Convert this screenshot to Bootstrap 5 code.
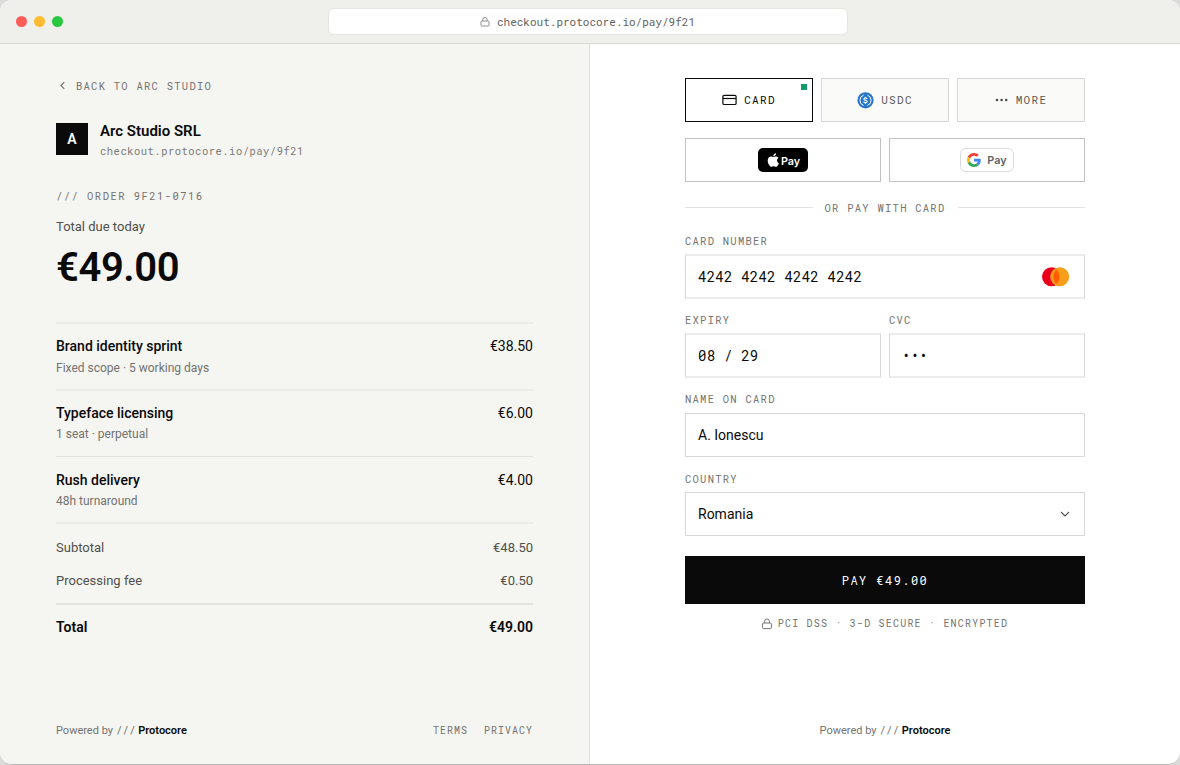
<!DOCTYPE html>
<html lang="en">
<head>
<meta charset="utf-8">
<meta name="viewport" content="width=device-width, initial-scale=1">
<title>Checkout – Arc Studio SRL</title>
<link rel="stylesheet" href="https://cdn.jsdelivr.net/npm/bootstrap@5.3.0/dist/css/bootstrap.min.css">
<style>
  :root { --ink:#0a0a0a; --muted:#737370; --soft:#50504d; --rule:#e2e2de; --field:#d9d9d9; }
  html, body { height:100%; overflow:hidden; }
  body { font-family:Roboto,"Liberation Sans",sans-serif; font-size:14px; color:var(--ink); background:#dcdcda; }
  svg { display:block; flex:none; }
  .mono { font-family:"Roboto Mono","Liberation Mono",monospace; }
  .browser { height:765px; border-bottom:1px solid #b7b7b5; border-radius:12px; overflow:hidden; background:#fff; }
  .titlebar { height:44px; background:#efefeb; border-bottom:1px solid #dadad5; padding:0 16px; }
  .dot { width:11px; height:11px; border-radius:50%; }
  .dots { gap:7px; width:311.5px; }
  .address { width:520px; height:27px; margin-top:-1px; padding-top:2px; border:1px solid #e6e6e2; border-radius:6px; background:#fff; font-size:11px; color:#62625e; gap:7px; }
  .summary { width:590px; background:#f5f5f1; border-right:1px solid #dfdfdb; padding:34px 56px 25px; }
  .caps { font-size:10.5px; letter-spacing:.12em; color:var(--muted); line-height:16px; }
  .back { gap:7px; }
  .merchant { margin-top:29px; gap:12px; height:32px; }
  .avatar { width:32px; height:32px; background:var(--ink); color:#fff; font-size:14px; font-weight:600; }
  .merchant-name { font-size:15px; font-weight:600; line-height:17px; letter-spacing:0; }
  .merchant-url { font-size:10.5px; letter-spacing:.047em; color:#7b7b78; line-height:16px; margin-top:3px; }
  .order { margin-top:33px; letter-spacing:.14em; }
  .due { margin-top:13px; font-size:13px; line-height:20px; color:var(--soft); }
  .amount { margin-top:7px; font-size:40px; line-height:48px; font-weight:600; letter-spacing:-.01em; }
  .lines { margin-top:30px; }
  .item { height:67px; border-top:2px solid #ebebe7; padding-top:12px; font-size:14px; line-height:20px; }
  .item.thin { border-top:1px solid #e2e2de; height:66px; padding-top:13px; }
  .item-name { font-weight:500; }
  .item-note { font-size:12px; line-height:16px; margin-top:3px; color:var(--muted); }
  .item:first-child .item-note { margin-top:4px; }
  .sums { border-top:2px solid #ebebe7; font-size:13px; color:var(--soft); height:81px; padding-top:14px; line-height:20px; }
  .sums .fee { margin-top:13px; }
  .grand { border-top:2px solid #e2e2de; padding-top:12px; line-height:20px; font-weight:600; }
  .foot { font-size:11px; line-height:16px; color:var(--muted); }
  .foot b { color:var(--ink); font-weight:600; }
  .links { font-size:10px; letter-spacing:.1em; padding-top:1px; }
  .pay-side { padding:34px 0 25px; }
  .form-col { width:400px; }
  .tab { height:44px; border:1px solid #d6d6d4; background:#fafaf8; font-size:11px; letter-spacing:.12em; color:#5a5a57; gap:7px; }
  .tab.on { border-color:var(--ink); background:#fff; color:var(--ink); position:relative; }
  .tab.on::after { content:""; position:absolute; width:6px; height:6px; right:5px; top:5px; background:#0f9d6e; }
  .wallet { height:44px; border:1px solid #c3c3c3; background:#fff; }
  .applepay { width:50px; height:24px; border-radius:5px; background:#000; color:#fff; font:600 10.8px Inter,sans-serif; gap:2px; padding-left:1px; }
  .apple-word { padding-top:2px; }
  .gpay { width:54px; height:24px; border-radius:6px; border:1px solid #dadce0; color:#5f6368; font:600 10.9px Inter,sans-serif; gap:6px; }
  .divider { height:16px; margin-top:18px; gap:12px; }
  .divider i { height:1px; background:#e2e2e0; margin-top:-1px; }
  .fld-label { line-height:17px; }
  .fld { height:44px; border:1px solid #d8d8d8; padding:0 12px; font-size:14px; }
  .fld.tall { height:45px; border-width:2px 1px; border-top-color:#ececec; border-bottom-color:#ececec; }
  .fld.mono { letter-spacing:.017em; }
  .paybtn { height:48px; background:var(--ink); color:#fff; font-size:12px; letter-spacing:.12em; margin-top:20px; }
  .secure { margin-top:12px; gap:6px; font-size:10px; }
</style>
</head>
<body>
<div class="browser d-flex flex-column">
  <header class="titlebar d-flex align-items-center flex-shrink-0">
    <div class="dots d-flex">
      <span class="dot" style="background:#ff5f57"></span>
      <span class="dot" style="background:#febc2e"></span>
      <span class="dot" style="background:#28c840"></span>
    </div>
    <div class="address mono d-flex align-items-center justify-content-center">
      <svg width="10" height="11" viewBox="0 0 10 11" fill="none" stroke="#8f8f8b"><rect x="1" y="4" width="8" height="5" rx=".8"/><path d="M2.8 4V2.7a2.2 2.2 0 0 1 4.4 0V4"/></svg>
      <span>checkout.protocore.io/pay/9f21</span>
    </div>
  </header>

  <main class="d-flex flex-grow-1">
    <section class="summary d-flex flex-column flex-shrink-0">
      <div class="back caps mono d-flex align-items-center">
        <svg width="13" height="12" viewBox="0 0 13 12" fill="none" stroke="#6f6f6b" stroke-width="1.1"><path d="M8.3 2.2 4.9 5.5l3.4 3.3"/></svg>
        <span>BACK TO ARC STUDIO</span>
      </div>
      <div class="merchant d-flex">
        <div class="avatar d-flex align-items-center justify-content-center">A</div>
        <div>
          <div class="merchant-name">Arc Studio SRL</div>
          <div class="merchant-url mono">checkout.protocore.io/pay/9f21</div>
        </div>
      </div>
      <div class="order caps mono">/// ORDER 9F21-0716</div>
      <div class="due">Total due today</div>
      <div class="amount">€49.00</div>

      <div class="lines">
        <div class="item d-flex justify-content-between">
          <div><div class="item-name">Brand identity sprint</div><div class="item-note">Fixed scope · 5 working days</div></div>
          <div>€38.50</div>
        </div>
        <div class="item d-flex justify-content-between">
          <div><div class="item-name">Typeface licensing</div><div class="item-note">1 seat · perpetual</div></div>
          <div>€6.00</div>
        </div>
        <div class="item thin d-flex justify-content-between">
          <div><div class="item-name">Rush delivery</div><div class="item-note">48h turnaround</div></div>
          <div>€4.00</div>
        </div>
        <div class="sums">
          <div class="d-flex justify-content-between"><span>Subtotal</span><span>€48.50</span></div>
          <div class="fee d-flex justify-content-between"><span>Processing fee</span><span>€0.50</span></div>
        </div>
        <div class="grand d-flex justify-content-between"><span>Total</span><span>€49.00</span></div>
      </div>

      <footer class="foot d-flex justify-content-between mt-auto">
        <span>Powered by <span class="mono">///</span> <b>Protocore</b></span>
        <span class="caps mono links d-flex"><span class="me-3">TERMS</span><span>PRIVACY</span></span>
      </footer>
    </section>

    <section class="pay-side flex-grow-1 d-flex flex-column align-items-center">
      <div class="form-col">
        <div class="d-flex gap-2">
          <div class="tab on mono flex-fill w-100 d-flex align-items-center justify-content-center">
            <svg width="15" height="12" viewBox="0 0 15 12" fill="none" stroke="#0a0a0a" stroke-width="1.2"><rect x=".9" y="1.3" width="13.2" height="9.2" rx="1.3"/><path d="M1 4.5h13"/></svg>
            <span>CARD</span>
          </div>
          <div class="tab mono flex-fill w-100 d-flex align-items-center justify-content-center">
            <svg width="17" height="17" viewBox="0 0 17 17" fill="none" stroke="#fff"><circle cx="8.5" cy="8.3" r="8.1" fill="#2775ca" stroke="none"/><path d="M6.6 3.1a5.5 5.5 0 0 0 0 10.4M10.4 3.1a5.5 5.5 0 0 1 0 10.4"/><path d="M10.1 7c-.1-.8-.7-1.1-1.6-1.1-1 0-1.6.4-1.6 1.1 0 1.8 3.3.9 3.3 2.6 0 .8-.7 1.2-1.7 1.2s-1.7-.4-1.7-1.3M8.5 4.7v1.2M8.5 10.8V12" stroke-width="1.1"/></svg>
            <span>USDC</span>
          </div>
          <div class="tab mono flex-fill w-100 d-flex align-items-center justify-content-center">
            <svg width="14" height="4" viewBox="0 0 14 4" fill="#4b4b48"><circle cx="2" cy="2" r="1.3"/><circle cx="6.6" cy="2" r="1.3"/><circle cx="11.2" cy="2" r="1.3"/></svg>
            <span>MORE</span>
          </div>
        </div>

        <div class="d-flex gap-2 mt-3">
          <div class="wallet w-100 d-flex align-items-center justify-content-center">
            <div class="applepay d-flex align-items-center justify-content-center">
              <svg width="12" height="14" viewBox="1 0 21 24" fill="#fff"><path d="M12.152 6.896c-.948 0-2.415-1.078-3.96-1.04-2.04.027-3.91 1.183-4.961 3.014-2.117 3.675-.546 9.103 1.519 12.09 1.013 1.454 2.208 3.09 3.792 3.039 1.52-.065 2.09-.987 3.935-.987 1.831 0 2.35.987 3.96.948 1.637-.026 2.676-1.48 3.676-2.948 1.156-1.688 1.636-3.325 1.662-3.415-.039-.013-3.182-1.221-3.22-4.857-.026-3.04 2.48-4.494 2.597-4.559-1.429-2.09-3.623-2.324-4.39-2.376-2-.156-3.675 1.09-4.61 1.09zM15.53 3.83c.843-1.012 1.4-2.427 1.245-3.83-1.207.052-2.662.805-3.532 1.818-.78.896-1.454 2.338-1.273 3.714 1.338.104 2.715-.688 3.56-1.701"/></svg>
              <span class="apple-word">Pay</span>
            </div>
          </div>
          <div class="wallet w-100 d-flex align-items-center justify-content-center">
            <div class="gpay d-flex align-items-center justify-content-center">
              <svg width="14" height="14" viewBox="0 0 48 48"><path fill="#EA4335" d="M24 9.5c3.54 0 6.71 1.22 9.21 3.6l6.85-6.85C35.9 2.38 30.47 0 24 0 14.62 0 6.51 5.38 2.56 13.22l7.98 6.19C12.43 13.72 17.74 9.5 24 9.5z"/><path fill="#4285F4" d="M46.98 24.55c0-1.57-.15-3.09-.38-4.55H24v9.02h12.94c-.58 2.96-2.26 5.48-4.78 7.18l7.73 6c4.51-4.18 7.09-10.36 7.09-17.65z"/><path fill="#FBBC05" d="M10.53 28.59c-.48-1.45-.76-2.99-.76-4.59s.27-3.14.76-4.59l-7.98-6.19C.92 16.46 0 20.12 0 24c0 3.88.92 7.54 2.56 10.78l7.97-6.19z"/><path fill="#34A853" d="M24 48c6.48 0 11.93-2.13 15.89-5.81l-7.73-6c-2.15 1.45-4.92 2.3-8.16 2.3-6.26 0-11.57-4.22-13.47-9.91l-7.98 6.19C6.51 42.62 14.62 48 24 48z"/></svg>
              <span>Pay</span>
            </div>
          </div>
        </div>

        <div class="divider d-flex align-items-center"><i class="flex-fill"></i><span class="caps mono">OR PAY WITH CARD</span><i class="flex-fill"></i></div>

        <div class="fld-label caps mono" style="margin-top:17px">CARD NUMBER</div>
        <div class="fld tall mono d-flex align-items-center justify-content-between mt-1">
          <span>4242 4242 4242 4242</span>
          <svg width="30" height="20" viewBox="0 0 30 20"><circle cx="9.5" cy="9.7" r="9.5" fill="#eb001b"/><circle cx="17.7" cy="9.7" r="9.5" fill="#f79e1b"/><path d="M14.2 2.4a9.4 9.4 0 0 1 0 14.6 10.6 10.6 0 0 1 0-14.6z" fill="#ff5f00"/></svg>
        </div>

        <div class="d-flex gap-2" style="margin-top:13px">
          <div class="w-100"><div class="fld-label caps mono">EXPIRY</div><div class="fld tall mono d-flex align-items-center mt-1">08 / 29</div></div>
          <div class="w-100"><div class="fld-label caps mono">CVC</div><div class="fld tall mono d-flex align-items-center mt-1"><span class="cvc">•••</span></div></div>
        </div>

        <div class="fld-label caps mono" style="margin-top:13px">NAME ON CARD</div>
        <div class="fld d-flex align-items-center" style="margin-top:5px">A. Ionescu</div>

        <div class="fld-label caps mono" style="margin-top:14px">COUNTRY</div>
        <div class="fld d-flex align-items-center justify-content-between" style="margin-top:4px">
          <span>Romania</span>
          <svg width="14" height="10" viewBox="0 0 14 10" fill="none" stroke="#555552" stroke-width="1.2"><path d="M3 3l4 4 4-4"/></svg>
        </div>

        <div class="paybtn mono d-flex align-items-center justify-content-center">PAY €49.00</div>
        <div class="secure caps mono d-flex align-items-center justify-content-center">
          <svg width="10" height="12" viewBox="0 0 10 12" fill="none" stroke="#737370"><rect x=".6" y="5" width="8.8" height="5.6" rx="1"/><path d="M2.6 5V3.4a2.4 2.4 0 0 1 4.8 0V5"/></svg>
          <span>PCI DSS · 3-D SECURE · ENCRYPTED</span>
        </div>
      </div>
      <footer class="foot mt-auto">Powered by <span class="mono">///</span> <b>Protocore</b></footer>
    </section>
  </main>
</div>
<script src="https://cdn.jsdelivr.net/npm/bootstrap@5.3.0/dist/js/bootstrap.bundle.min.js"></script>
</body>
</html>
